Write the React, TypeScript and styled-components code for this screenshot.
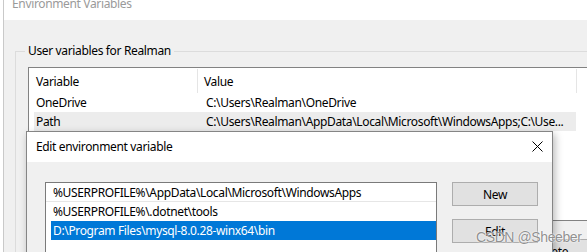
import { createGlobalStyle, styled } from "styled-components"

const GlobalStyle = createGlobalStyle`
  html, body {
    margin: 0;
    padding: 0;
    background: #ffffff;
  }
  body {
    font-family: "Noto Sans", "Open Sans", sans-serif;
    font-size: 12px;
    letter-spacing: -0.35px;
    color: #000000;
  }
`

const Screen = styled.div`
  position: relative;
  width: 587px;
  height: 252px;
  overflow: hidden;
  background: #ffffff;
`

/* ---------- background window: Environment Variables ---------- */

const BgWindow = styled.div`
  margin-left: 3px;
  width: 640px;
  height: 252px;
  border-left: 1px solid #c9c9c9;
  display: flex;
  flex-direction: column;
`

const BgTitleBar = styled.div`
  height: 20px;
  background: #ffffff;
  padding-left: 8px;
  flex-shrink: 0;
`

const BgTitle = styled.span`
  display: block;
  margin-top: -4px;
  line-height: 16px;
  color: #9a9a9a;
`

const BgBody = styled.div`
  flex: 1;
  background: #f0f0f0;
  padding: 23px 0 0 11px;
`

const GroupBox = styled.fieldset`
  margin: 0;
  padding: 0 0 0 12px;
  border: 1px solid #dcdcdc;
  border-right: none;
  border-bottom: none;
  min-width: 0;
`

const GroupLegend = styled.legend`
  margin-left: -3px;
  padding: 0 3px;
  line-height: 16px;
`

const VarList = styled.div`
  margin-top: 8px;
  height: 152px;
  background: #ffffff;
  border-top: 1px solid #828282;
  border-left: 1px solid #828282;
  border-bottom: 1px solid #828282;
`

const ListHeader = styled.div`
  display: flex;
  height: 25px;
`

const HeaderCell = styled.div<{ $w: number }>`
  width: ${p => p.$w}px;
  flex-shrink: 0;
  display: flex;
  align-items: center;
  padding-left: ${p => (p.$w > 200 ? 6 : 7)}px;
  box-sizing: border-box;
  height: 24px;
  margin-top: 1px;
  border-right: 1px solid #e5e5e5;
`

const VarRow = styled.div<{ $selected?: boolean }>`
  display: grid;
  grid-template-columns: 170px 1fr;
  align-items: center;
  margin-left: 5px;
  width: 542px;
  height: 19px;
  padding-left: 2px;
  box-sizing: border-box;
  background: ${p => (p.$selected ? "#ececec" : "transparent")};
  white-space: nowrap;
`

const BgButtons = styled.div`
  display: flex;
  justify-content: flex-end;
  gap: 8px;
  margin-top: 18px;
  padding-right: 50px;
`

const WinButton = styled.button`
  width: 86px;
  height: 24px;
  padding: 0;
  font: inherit;
  letter-spacing: inherit;
  color: #000000;
  background: #e1e1e1;
  border: 1px solid #adadad;
  border-radius: 0;
`

/* ---------- foreground dialog: Edit environment variable ---------- */

const Dialog = styled.div`
  position: absolute;
  left: 26px;
  top: 131px;
  width: 527px;
  height: 150px;
  box-sizing: border-box;
  border: 1px solid #858585;
  background: #f0f0f0;
  box-shadow: 2px 3px 8px rgba(0, 0, 0, 0.28);
  display: flex;
  flex-direction: column;
`

const DialogTitleBar = styled.div`
  height: 30px;
  flex-shrink: 0;
  background: #ffffff;
  display: flex;
  align-items: center;
  justify-content: space-between;
  padding: 0 4px 0 9px;
`

const DialogTitle = styled.span`
  line-height: 16px;
`

const CloseButton = styled.div`
  width: 22px;
  height: 22px;
  display: flex;
  align-items: center;
  justify-content: center;
  margin-top: -2px;
`

const DialogBody = styled.div`
  display: flex;
  align-items: flex-start;
  padding: 20px 0 0 18px;
`

const PathList = styled.div`
  width: 392px;
  height: 90px;
  box-sizing: border-box;
  flex-shrink: 0;
  background: #ffffff;
  border: 1px solid #7a7a7a;
`

const PathRow = styled.div<{ $selected?: boolean; $divider?: boolean }>`
  height: 19px;
  box-sizing: border-box;
  display: flex;
  align-items: center;
  white-space: nowrap;
  color: ${p => (p.$selected ? "#ffffff" : "#000000")};
  background: ${p => (p.$selected ? "#0078d7" : "transparent")};
  border-bottom: ${p => (p.$divider ? "1px solid #e6e6e6" : "none")};
  margin-left: ${p => (p.$divider ? 0 : 5)}px;
  padding-left: ${p => (p.$divider ? 7 : 2)}px;
`

const SideButtons = styled.div`
  display: flex;
  flex-direction: column;
  gap: 13px;
  margin-left: 15px;
`

const Watermark = styled.div`
  position: absolute;
  left: 476px;
  top: 229px;
  font-family: "Liberation Sans", Arial, sans-serif;
  font-size: 14px;
  line-height: 16px;
  letter-spacing: -0.4px;
  color: rgba(115, 115, 115, 0.8);
  text-shadow: 0 0 2px #ffffff, 0 0 1px #ffffff;
  white-space: nowrap;
  pointer-events: none;
`

const vars = [
  { name: "OneDrive", value: "C:\\Users\\Realman\\OneDrive" },
  { name: "Path", value: "C:\\Users\\Realman\\AppData\\Local\\Microsoft\\WindowsApps;C:\\Use...", selected: true },
]

const paths = [
  "%USERPROFILE%\\AppData\\Local\\Microsoft\\WindowsApps",
  "%USERPROFILE%\\.dotnet\\tools",
  "D:\\Program Files\\mysql-8.0.28-winx64\\bin",
]

export default function App() {
  return (
    <Screen>
      <GlobalStyle />
      <BgWindow>
        <BgTitleBar>
          <BgTitle>Environment Variables</BgTitle>
        </BgTitleBar>
        <BgBody>
          <GroupBox>
            <GroupLegend>User variables for Realman</GroupLegend>
            <VarList>
              <ListHeader>
                <HeaderCell $w={169}>Variable</HeaderCell>
                <HeaderCell $w={379}>Value</HeaderCell>
              </ListHeader>
              {vars.map(v => (
                <VarRow key={v.name} $selected={v.selected}>
                  <span>{v.name}</span>
                  <span>{v.value}</span>
                </VarRow>
              ))}
            </VarList>
            <BgButtons>
              <WinButton>New...</WinButton>
              <WinButton>Edit...</WinButton>
              <WinButton>Delete</WinButton>
            </BgButtons>
          </GroupBox>
        </BgBody>
      </BgWindow>

      <Dialog>
        <DialogTitleBar>
          <DialogTitle>Edit environment variable</DialogTitle>
          <CloseButton>
            <svg width="11" height="11" viewBox="0 0 11 11">
              <path d="M0.5 0.5 L10.5 10.5 M10.5 0.5 L0.5 10.5" stroke="#000" strokeWidth="1" fill="none" />
            </svg>
          </CloseButton>
        </DialogTitleBar>
        <DialogBody>
          <PathList>
            {paths.map((p, i) => (
              <PathRow key={p} $divider={i === 0} $selected={i === 2}>
                {p}
              </PathRow>
            ))}
          </PathList>
          <SideButtons>
            <WinButton>New</WinButton>
            <WinButton>Edit</WinButton>
          </SideButtons>
        </DialogBody>
      </Dialog>

      <Watermark>CSDN @Sheeber</Watermark>
    </Screen>
  )
}
